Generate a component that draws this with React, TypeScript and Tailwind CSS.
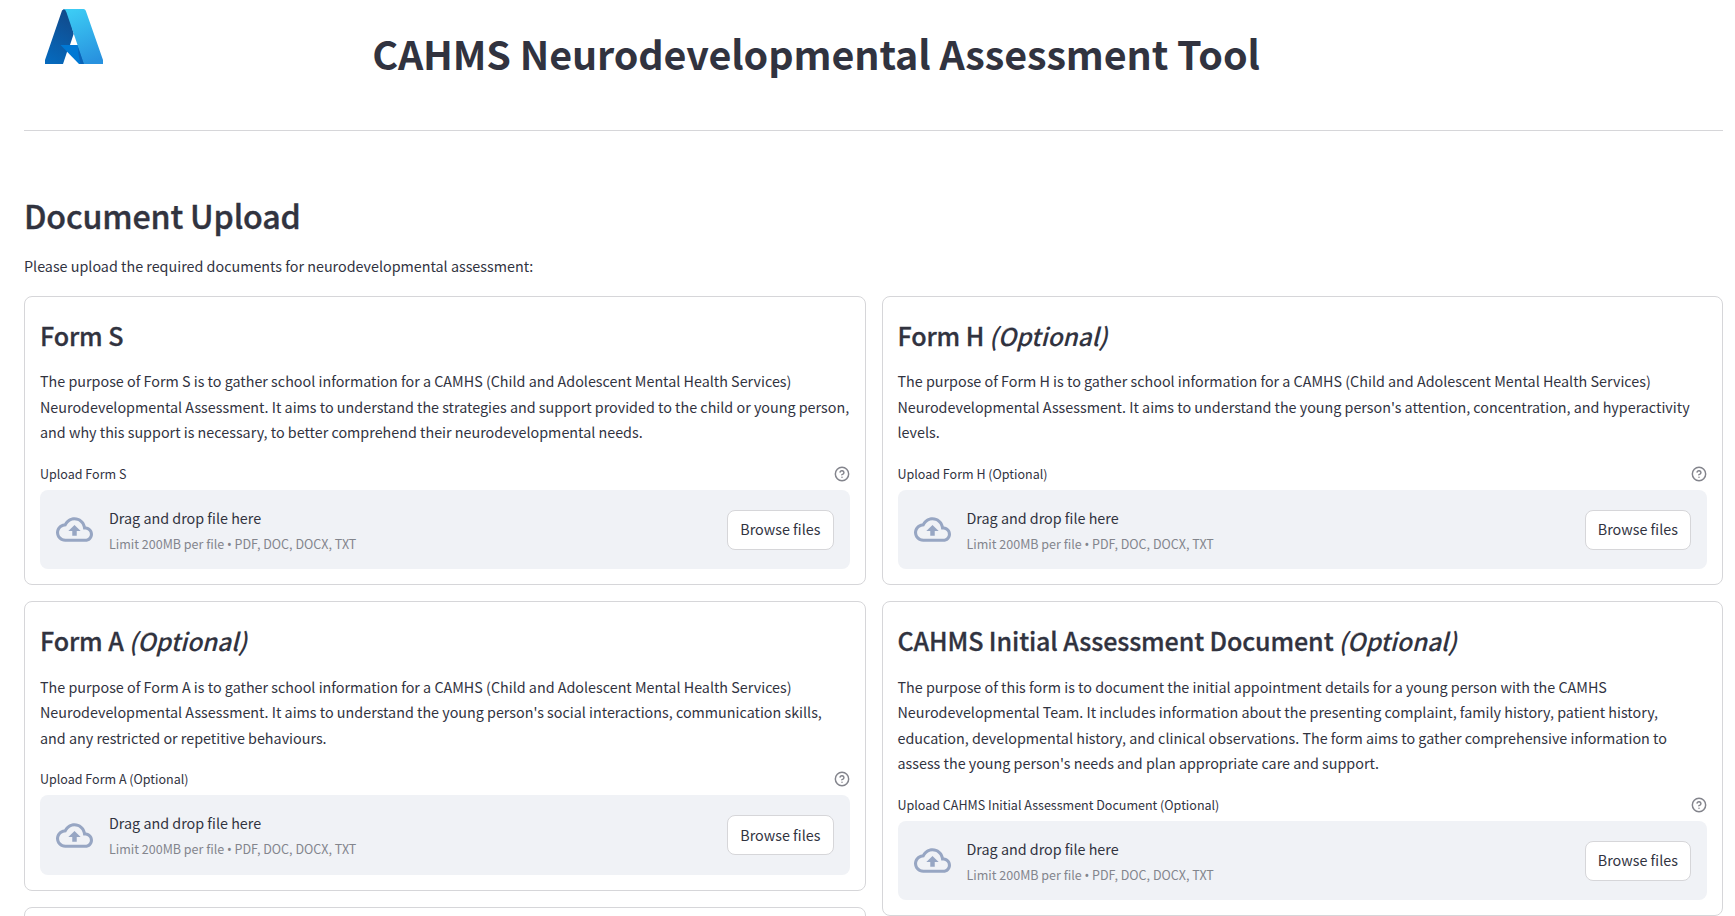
import React from "react";

type Form = { title: string; optional: boolean; lines: string[]; label: string };

const left: Form[] = [
  {
    title: "Form S",
    optional: false,
    lines: [
      "The purpose of Form S is to gather school information for a CAMHS (Child and Adolescent Mental Health Services)",
      "Neurodevelopmental Assessment. It aims to understand the strategies and support provided to the child or young person,",
      "and why this support is necessary, to better comprehend their neurodevelopmental needs.",
    ],
    label: "Upload Form S",
  },
  {
    title: "Form A",
    optional: true,
    lines: [
      "The purpose of Form A is to gather school information for a CAMHS (Child and Adolescent Mental Health Services)",
      "Neurodevelopmental Assessment. It aims to understand the young person's social interactions, communication skills,",
      "and any restricted or repetitive behaviours.",
    ],
    label: "Upload Form A (Optional)",
  },
];

const right: Form[] = [
  {
    title: "Form H",
    optional: true,
    lines: [
      "The purpose of Form H is to gather school information for a CAMHS (Child and Adolescent Mental Health Services)",
      "Neurodevelopmental Assessment. It aims to understand the young person's attention, concentration, and hyperactivity",
      "levels.",
    ],
    label: "Upload Form H (Optional)",
  },
  {
    title: "CAHMS Initial Assessment Document",
    optional: true,
    lines: [
      "The purpose of this form is to document the initial appointment details for a young person with the CAMHS",
      "Neurodevelopmental Team. It includes information about the presenting complaint, family history, patient history,",
      "education, developmental history, and clinical observations. The form aims to gather comprehensive information to",
      "assess the young person's needs and plan appropriate care and support.",
    ],
    label: "Upload CAHMS Initial Assessment Document (Optional)",
  },
];

function Logo() {
  return (
    <svg className="h-[56px] w-[60px]" viewBox="0 0 60 56">
      <defs>
        <linearGradient id="lg1" x1="0.6" y1="0" x2="0.3" y2="1">
          <stop offset="0" stopColor="#114a8b" />
          <stop offset="1" stopColor="#0669bc" />
        </linearGradient>
        <linearGradient id="lg2" x1="0.3" y1="0" x2="0.6" y2="1">
          <stop offset="0" stopColor="#3ccbf4" />
          <stop offset="1" stopColor="#2892df" />
        </linearGradient>
      </defs>
      <path d="M20 0L18 1.500 1 51v4h18l4-12 3-7 3.700-11.300L24 2z" fill="url(#lg1)" />
      <path d="M16.500 36H34l6.500 19H35z" fill="#0078d4" />
      <path d="M34 36l6.500 19H36.500L34.500 45z" fill="#0a63b8" />
      <path d="M20 0h19.500q1.700 0 2.300 1.800L59 51v4H40L22.500 3.500Q21.500 0.800 20 0z" fill="url(#lg2)" />
    </svg>
  );
}

function HelpIcon() {
  return (
    <svg className="size-4" viewBox="0 0 24 24" fill="none" stroke="#83848c" strokeWidth="2.200" strokeLinecap="round" strokeLinejoin="round">
      <circle cx="12" cy="12" r="10" />
      <path d="M9.090 9a3 3 0 0 1 5.830 1c0 2-3 3-3 3" />
      <path d="M12 17h.01" />
    </svg>
  );
}

function CloudIcon() {
  return (
    <svg className="size-[37px] shrink-0" viewBox="0 0 24 24" fill="#97a6c3">
      <path d="M19.350 10.040C18.670 6.590 15.640 4 12 4 9.110 4 6.600 5.640 5.350 8.040 2.340 8.360 0 10.910 0 14c0 3.310 2.690 6 6 6h13c2.760 0 5-2.240 5-5 0-2.640-2.050-4.780-4.650-4.960zM19 18H6c-2.210 0-4-1.790-4-4 0-2.050 1.530-3.760 3.560-3.970l1.070-.11.500-.950C8.080 7.140 9.940 6 12 6c2.620 0 4.880 1.860 5.390 4.430l.3 1.500 1.530.11c1.560.1 2.780 1.410 2.780 2.960 0 1.650-1.350 3-3 3zM8 13h2.550v3h2.900v-3H16l-4-4z" />
    </svg>
  );
}

function FormCard({ form }: { form: Form }) {
  return (
    <section className="rounded-lg border border-[#d6d6d9] p-[15px]">
      <h3 className="h-[56.300px] pt-[7px] text-[25.070px] leading-[33.600px] font-medium tracking-[-0.11px] whitespace-nowrap [-webkit-text-stroke:0.3px_#31333f]">
        {form.title}
        {form.optional && <em className="ml-[5px] text-[24.500px] [-webkit-text-stroke:0.1px_#31333f]">(Optional)</em>}
      </h3>
      <p className="text-[14.330px] leading-[25.600px] whitespace-nowrap">
        {form.lines.map((line) => (
          <span key={line} className="block">
            {line}
          </span>
        ))}
      </p>
      <div className="mt-[17.100px] mb-[3.900px] flex h-6 items-center justify-between">
        <span className="text-[12.530px]">{form.label}</span>
        <HelpIcon />
      </div>
      <div className="flex h-[79.300px] items-center rounded-lg bg-[#f0f2f6] px-4">
        <CloudIcon />
        <div className="ml-4 flex flex-col pt-[3px]">
          <span className="text-[14.330px] leading-[25.600px]">Drag and drop file here</span>
          <span className="text-[12.530px] leading-[25.600px] text-[#83858d]">
            Limit 200MB per file <span className="font-['Noto_Sans']">•</span> PDF, DOC, DOCX, TXT
          </span>
        </div>
        <button className="ml-auto h-10 w-[106.400px] rounded-lg border border-[#d6d6d9] bg-white pb-px text-[14.330px]">Browse files</button>
      </div>
    </section>
  );
}

export default function App() {
  return (
    <main className="h-[916px] w-full overflow-hidden bg-white pr-[12px] pl-6 font-['Noto_Sans_CJK_SC','Noto_Sans',sans-serif] text-[#31333f]">
      <header className="flex h-[131px] border-b border-[#d6d6d9]">
        <div className="w-[200px] pt-[9px] pl-5">
          <Logo />
        </div>
        <h1 className="w-[1184px] pt-[26px] text-center text-[39.450px] leading-[53px] font-bold tracking-[-0.1px] whitespace-nowrap">
          CAHMS Neurodevelopmental Assessment Tool
        </h1>
      </header>
      <h2 className="mt-[63px] text-[32.200px] leading-[43px] font-medium tracking-[-0.16px] [-webkit-text-stroke:0.4px_#31333f]">
        Document Upload
      </h2>
      <p className="mt-4 text-[14.330px] leading-[25.600px]">Please upload the required documents for neurodevelopmental assessment:</p>
      <div className="mt-[17.350px] grid grid-cols-2 items-start gap-4">
        <div className="flex flex-col gap-4">
          {left.map((f) => (
            <FormCard key={f.title} form={f} />
          ))}
          <section className="h-[289px] rounded-lg border border-[#d6d6d9]" />
        </div>
        <div className="flex flex-col gap-4">
          {right.map((f) => (
            <FormCard key={f.title} form={f} />
          ))}
        </div>
      </div>
    </main>
  );
}
